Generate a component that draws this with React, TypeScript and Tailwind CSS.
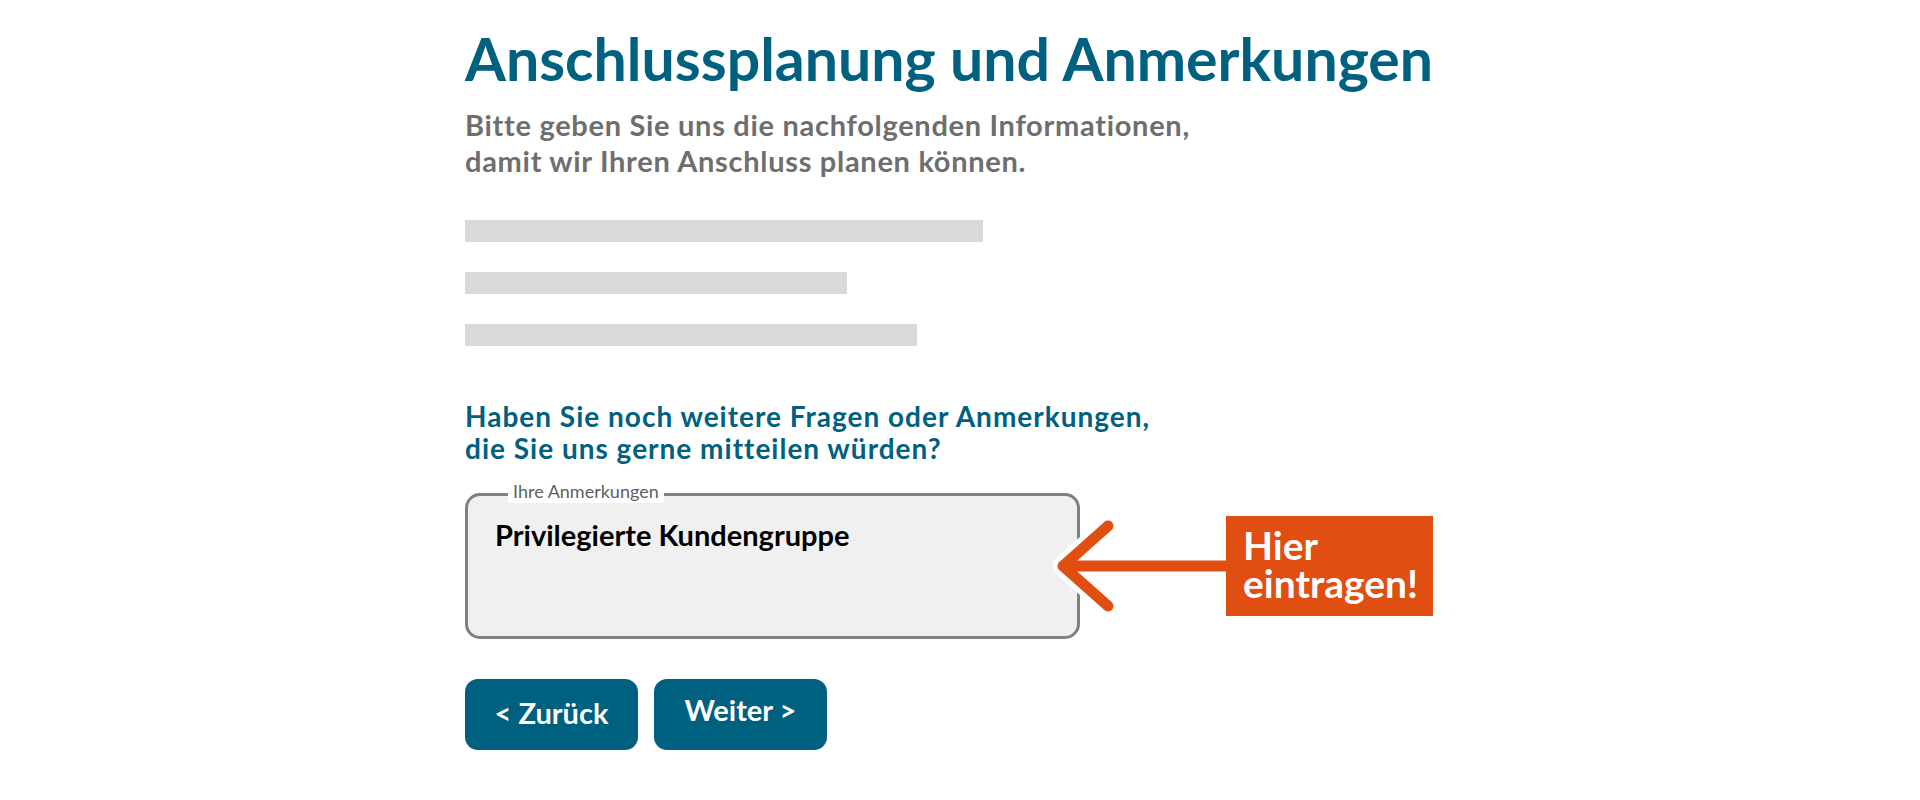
import React from "react";

const teal = "text-[#00607f]";

function Arrow() {
  const d = "M58 15 L13 55 L58 95 M13 55 L176 55";
  return (
    <svg width="176" height="110" viewBox="0 0 176 110" className="relative z-10 -ml-[30px] shrink-0">
      <path d="M58 15 L13 55 L58 95" fill="none" stroke="#ffffff" strokeWidth="21" strokeLinecap="round" strokeLinejoin="round" />
      <path d={d} fill="none" stroke="#e04e12" strokeWidth="11" strokeLinecap="round" strokeLinejoin="round" />
    </svg>
  );
}

export default function App() {
  return (
    <main className="min-h-[800px] bg-white font-['Lato','Liberation_Sans',sans-serif]">
      <div className="mx-auto w-[990px] pt-[24px]">
        <h1 className={`text-[59px] leading-[70px] font-bold ${teal}`}>Anschlussplanung und Anmerkungen</h1>
        <p className="mt-[13px] text-[29px] leading-[36px] font-bold tracking-[0.7px] text-[#6e6e6e]">
          Bitte geben Sie uns die nachfolgenden Informationen,
          <br />
          damit wir Ihren Anschluss planen können.
        </p>

        <div className="mt-[41px] flex flex-col gap-[30px]">
          <div className="h-[22px] w-[518px] bg-[#d9d9d9]" />
          <div className="h-[22px] w-[382px] bg-[#d9d9d9]" />
          <div className="h-[22px] w-[452px] bg-[#d9d9d9]" />
        </div>

        <h2 className={`mt-[54px] text-[28px] leading-[32px] font-bold tracking-[1px] ${teal}`}>
          Haben Sie noch weitere Fragen oder Anmerkungen,
          <br />
          die Sie uns gerne mitteilen würden?
        </h2>

        <div className="mt-[29px] flex items-center">
          <div className="relative h-[146px] w-[615px] shrink-0 rounded-[15px] border-[3px] border-[#808080] bg-[#f0f0f0] pl-[27px] pt-[21px]">
            <span className="absolute left-[40px] top-[-16px] h-[23px] bg-white px-[5px] text-[18px] leading-[23px] text-[#5f5f5f]">
              Ihre Anmerkungen
            </span>
            <div className="text-[29px] leading-[35px] font-bold text-black">Privilegierte Kundengruppe</div>
          </div>
          <Arrow />
          <div className="flex h-[100px] w-[207px] shrink-0 flex-col bg-[#e04e12] pl-[17px] pt-[10px] text-[39px] leading-[38px] font-bold text-white">
            <span>Hier</span>
            <span>eintragen!</span>
          </div>
        </div>

        <div className="mt-[40px] flex gap-[16px]">
          <button className="flex h-[71px] w-[173px] items-center justify-center rounded-[13px] bg-[#00607f] pb-[4px] text-[29px] font-bold text-white">
            &lt; Zurück
          </button>
          <button className="flex h-[71px] w-[173px] items-center justify-center rounded-[13px] bg-[#00607f] pb-[9px] text-[29px] font-bold text-white">
            Weiter &gt;
          </button>
        </div>
      </div>
    </main>
  );
}
